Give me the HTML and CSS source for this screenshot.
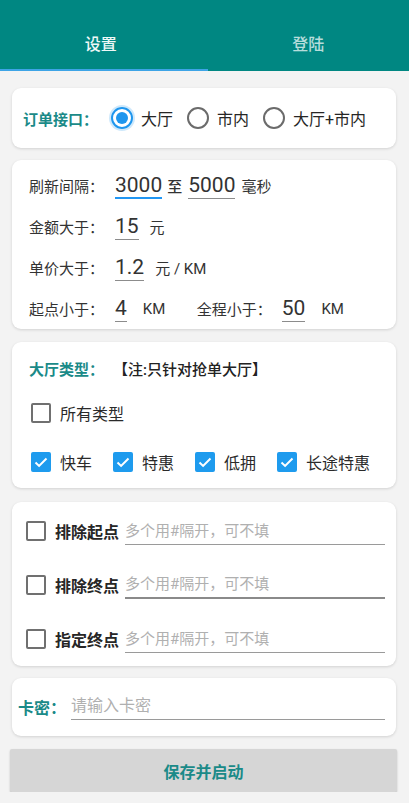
FILE: index.html
```html
<!DOCTYPE html>
<html lang="zh-CN">
<head>
<meta charset="utf-8">
<title>设置</title>
<link rel="stylesheet" href="styles.css">
</head>
<body>
<header class="tabs">
  <div class="tab active">设置</div>
  <div class="tab">登陆</div>
</header>
<main class="content">
  <section class="card card-api">
    <span class="title api-title">订单接口：</span>
    <label class="radio-item"><span class="radio checked"></span><span>大厅</span></label>
    <label class="radio-item"><span class="radio"></span><span>市内</span></label>
    <label class="radio-item"><span class="radio"></span><span>大厅+市内</span></label>
  </section>

  <section class="card card-params">
    <div class="row">
      <span class="plabel">刷新间隔：</span>
      <span class="field focused">3000</span>
      <span class="unit u-to">至</span>
      <span class="field">5000</span>
      <span class="unit u-ms">毫秒</span>
    </div>
    <div class="row">
      <span class="plabel">金额大于：</span>
      <span class="field">15</span>
      <span class="unit u-gap">元</span>
    </div>
    <div class="row">
      <span class="plabel">单价大于：</span>
      <span class="field">1.2</span>
      <span class="unit u-gap">元 / KM</span>
    </div>
    <div class="row">
      <span class="plabel">起点小于：</span>
      <span class="field">4</span>
      <span class="unit u-km">KM</span>
      <span class="plabel plabel-2">全程小于：</span>
      <span class="field">50</span>
      <span class="unit u-km">KM</span>
    </div>
  </section>

  <section class="card card-types">
    <div class="types-head">
      <span class="title types-title">大厅类型：</span>
      <span class="note">【注:只针对抢单大厅】</span>
    </div>
    <div class="all-row">
      <span class="check"></span><span class="check-text">所有类型</span>
    </div>
    <div class="type-grid">
      <div class="type-item"><span class="check checked"><svg viewBox="0 0 20 20"><path d="M4.5 10.5l3.6 3.4L15.5 6.5"/></svg></span><span class="check-text">快车</span></div>
      <div class="type-item"><span class="check checked"><svg viewBox="0 0 20 20"><path d="M4.5 10.5l3.6 3.4L15.5 6.5"/></svg></span><span class="check-text">特惠</span></div>
      <div class="type-item"><span class="check checked"><svg viewBox="0 0 20 20"><path d="M4.5 10.5l3.6 3.4L15.5 6.5"/></svg></span><span class="check-text">低拥</span></div>
      <div class="type-item"><span class="check checked"><svg viewBox="0 0 20 20"><path d="M4.5 10.5l3.6 3.4L15.5 6.5"/></svg></span><span class="check-text">长途特惠</span></div>
    </div>
  </section>

  <section class="card card-filters">
    <div class="frow">
      <span class="check"></span>
      <span class="flabel">排除起点</span>
      <input class="line-input" type="text" placeholder="多个用#隔开，可不填">
    </div>
    <div class="frow">
      <span class="check"></span>
      <span class="flabel">排除终点</span>
      <input class="line-input dark" type="text" placeholder="多个用#隔开，可不填">
    </div>
    <div class="frow">
      <span class="check"></span>
      <span class="flabel">指定终点</span>
      <input class="line-input" type="text" placeholder="多个用#隔开，可不填">
    </div>
  </section>

  <section class="card card-key">
    <span class="title key-title">卡密：</span>
    <input class="line-input key-input" type="text" placeholder="请输入卡密">
  </section>

  <button class="save-btn" type="button">保存并启动</button>
</main>
</body>
</html>
```

FILE: styles.css
```css
* { box-sizing: border-box; }

body {
  margin: 0;
  background: #f3f3f3;
  font-family: Roboto, "Noto Sans CJK SC", sans-serif;
  color: #262626;
}

.tabs {
  display: flex;
  height: 71px;
  background: #008782;
}

.tab {
  flex: 1;
  display: flex;
  align-items: center;
  justify-content: center;
  padding-top: 16px;
  font-size: 16px;
  font-weight: 500;
  color: rgba(255, 255, 255, 0.72);
  border-bottom: 2px solid transparent;
}

.tab.active {
  color: #eef8f7;
  border-bottom-color: #3da4e6;
  padding-right: 6px;
}

.content {
  padding: 17px 13px 0 12px;
  display: flex;
  flex-direction: column;
}

.card {
  background: #fff;
  border-radius: 9px;
  box-shadow: 0 1px 3px rgba(0, 0, 0, 0.14);
}

.title {
  color: #1a8a88;
  font-weight: 700;
  font-size: 15px;
}

/* card 1 */
.card-api {
  height: 60px;
  display: flex;
  align-items: center;
  padding-left: 11px;
}

.api-title { width: 88px; }

.radio-item {
  display: flex;
  align-items: center;
  font-size: 16px;
  margin-right: 14px;
}

.radio {
  width: 22px;
  height: 22px;
  border: 2px solid #6b6b6b;
  border-radius: 50%;
  margin-right: 8px;
  position: relative;
}

.radio.checked {
  border-color: #1e96ee;
  box-shadow: 0 0 0 2px rgba(30, 150, 238, 0.22);
}

.radio.checked::after {
  content: "";
  position: absolute;
  left: 3px;
  top: 3px;
  width: 12px;
  height: 12px;
  border-radius: 50%;
  background: #1e96ee;
}

/* card 2 */
.card-params {
  margin-top: 12px;
  height: 169px;
  padding: 5px 0 0 17px;
}

.row {
  height: 41px;
  display: flex;
  align-items: center;
}

.plabel {
  width: 86px;
  font-size: 15px;
  color: #333;
}

.plabel-2 { width: 85px; }

.field {
  font-size: 21px;
  line-height: 26px;
  height: 27px;
  color: #333;
  border-bottom: 1px solid #8c8c8c;
}

.field.focused { border-bottom: 2px solid #2196f3; }

.unit {
  font-size: 15px;
  color: #333;
}

.u-to { margin: 0 6px 0 5px; font-weight: 500; }
.u-ms { margin-left: 6px; }
.u-gap { margin-left: 11px; }
.u-km { margin-left: 16px; width: 54px; }

/* card 3 */
.card-types {
  margin-top: 13px;
  height: 146px;
  padding-left: 19px;
}

.types-head {
  height: 52px;
  display: flex;
  align-items: center;
}

.types-title { width: 84px; margin-left: -2px; }

.note {
  font-size: 15px;
  font-weight: 500;
  color: #222;
}

.all-row {
  height: 38px;
  display: flex;
  align-items: center;
}

.check {
  width: 20px;
  height: 20px;
  border: 2px solid #707070;
  border-radius: 2px;
  flex: none;
  display: flex;
}

.check.checked {
  background: #1e9bee;
  border-color: #1e9bee;
}

.check svg {
  margin: -2px;
  width: 20px;
  height: 20px;
}

.check svg path {
  fill: none;
  stroke: #fff;
  stroke-width: 2;
}

.check-text {
  margin-left: 9px;
  font-size: 16px;
  color: #2a2a2a;
}

.type-grid {
  margin-top: 8px;
  height: 44px;
  display: grid;
  grid-template-columns: 82px 82px 82px auto;
  align-items: center;
}

.type-item {
  display: flex;
  align-items: center;
}

/* card 4 */
.card-filters {
  margin-top: 14px;
  height: 164px;
  padding: 2px 11px 0 14px;
}

.frow {
  height: 54px;
  display: flex;
  align-items: center;
}

.flabel {
  margin-left: 9px;
  font-size: 16px;
  font-weight: 700;
  color: #262626;
  white-space: nowrap;
}

.line-input {
  flex: 1;
  min-width: 0;
  margin-left: 6px;
  height: 27px;
  border: none;
  border-bottom: 1px solid #9a9a9a;
  outline: none;
  background: transparent;
  padding: 0;
  font-family: Roboto, "Noto Sans CJK SC", sans-serif;
  font-size: 15px;
  color: #333;
}

.line-input.dark { border-bottom: 2px solid #8a8a8a; }

.line-input::placeholder { color: #b0b0b0; }

/* card 5 */
.card-key {
  margin-top: 12px;
  height: 58px;
  display: flex;
  align-items: center;
  padding: 0 11px 0 6px;
}

.key-title { font-size: 16px; width: 53px; }

.key-input {
  margin-left: 0;
  font-size: 16px;
  height: 28px;
  position: relative;
  top: -1px;
}

.save-btn {
  margin: 13px -1px 0 -2px;
  height: 43px;
  border: none;
  border-radius: 2px;
  background: #d6d6d6;
  box-shadow: 0 1px 2px rgba(0, 0, 0, 0.22);
  color: #1a8a88;
  font-family: Roboto, "Noto Sans CJK SC", sans-serif;
  font-size: 16px;
  font-weight: 700;
}
```
